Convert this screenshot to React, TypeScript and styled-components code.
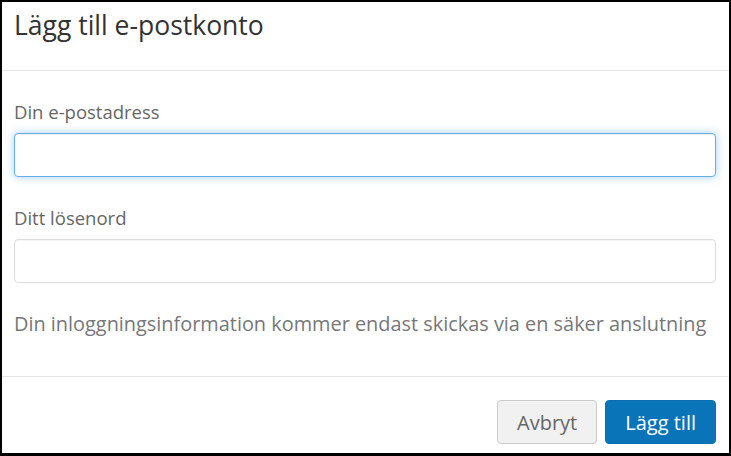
import React from 'react';
import styled, { createGlobalStyle } from 'styled-components';

const GlobalStyle = createGlobalStyle`
  html, body {
    margin: 0;
    padding: 0;
    background: #fff;
  }
  * {
    box-sizing: border-box;
  }
`;

const Frame = styled.div`
  width: 731px;
  height: 456px;
  border-style: solid;
  border-color: #000;
  border-width: 2px 2px 3px 2px;
  background: #fff;
  display: flex;
  flex-direction: column;
  font-family: 'Open Sans', 'Liberation Sans', sans-serif;
  overflow: hidden;
`;

const Header = styled.div`
  height: 69px;
  padding: 7px 13px 0 12px;
  border-bottom: 1px solid #e5e5e5;
`;

const Title = styled.h4`
  margin: 0;
  font-size: 26.5px;
  font-weight: 400;
  line-height: 32px;
  color: #333;
`;

const Body = styled.div`
  padding: 28px 13px 0 12px;
  display: flex;
  flex-direction: column;
  height: 306px;
  border-bottom: 1px solid #e5e5e5;
`;

const Field = styled.div`
  display: flex;
  flex-direction: column;
  margin-bottom: 28px;
`;

const Label = styled.label`
  font-size: 18.5px;
  line-height: 25px;
  color: #666;
  margin-bottom: 9px;
`;

const Input = styled.input<{ $focused?: boolean }>`
  height: 44px;
  width: 100%;
  border: 1px solid ${(p) => (p.$focused ? '#66afe9' : '#ddd')};
  border-radius: 4px;
  box-shadow: ${(p) =>
    p.$focused
      ? 'inset 0 1px 1px rgba(0,0,0,0.075), 0 0 8px rgba(102,175,233,0.6)'
      : 'inset 0 1px 1px rgba(0,0,0,0.05)'};
  outline: none;
  font: inherit;
  font-size: 18px;
  padding: 0 12px;
`;

const Help = styled.p`
  margin: -1px 0 0;
  font-size: 19.9px;
  line-height: 28px;
  color: #777;
`;

const Footer = styled.div`
  flex: 1;
  display: flex;
  justify-content: flex-end;
  align-items: flex-start;
  gap: 8px;
  padding: 23px 13px 0 12px;
`;

const Button = styled.button<{ $primary?: boolean }>`
  height: 44px;
  padding: 0 19px;
  border-radius: 4px;
  font: inherit;
  font-size: 20px;
  cursor: pointer;
  border: 1px solid ${(p) => (p.$primary ? '#0a6fb0' : '#ccc')};
  background: ${(p) => (p.$primary ? '#0a74b8' : '#f1f1f1')};
  color: ${(p) => (p.$primary ? '#fff' : '#666')};
`;

export default function App() {
  return (
    <>
      <GlobalStyle />
      <Frame>
        <Header>
          <Title>Lägg till e-postkonto</Title>
        </Header>
        <Body>
          <Field>
            <Label>Din e-postadress</Label>
            <Input type="email" $focused />
          </Field>
          <Field>
            <Label>Ditt lösenord</Label>
            <Input type="password" />
          </Field>
          <Help>Din inloggningsinformation kommer endast skickas via en säker anslutning</Help>
        </Body>
        <Footer>
          <Button>Avbryt</Button>
          <Button $primary>Lägg till</Button>
        </Footer>
      </Frame>
    </>
  );
}
